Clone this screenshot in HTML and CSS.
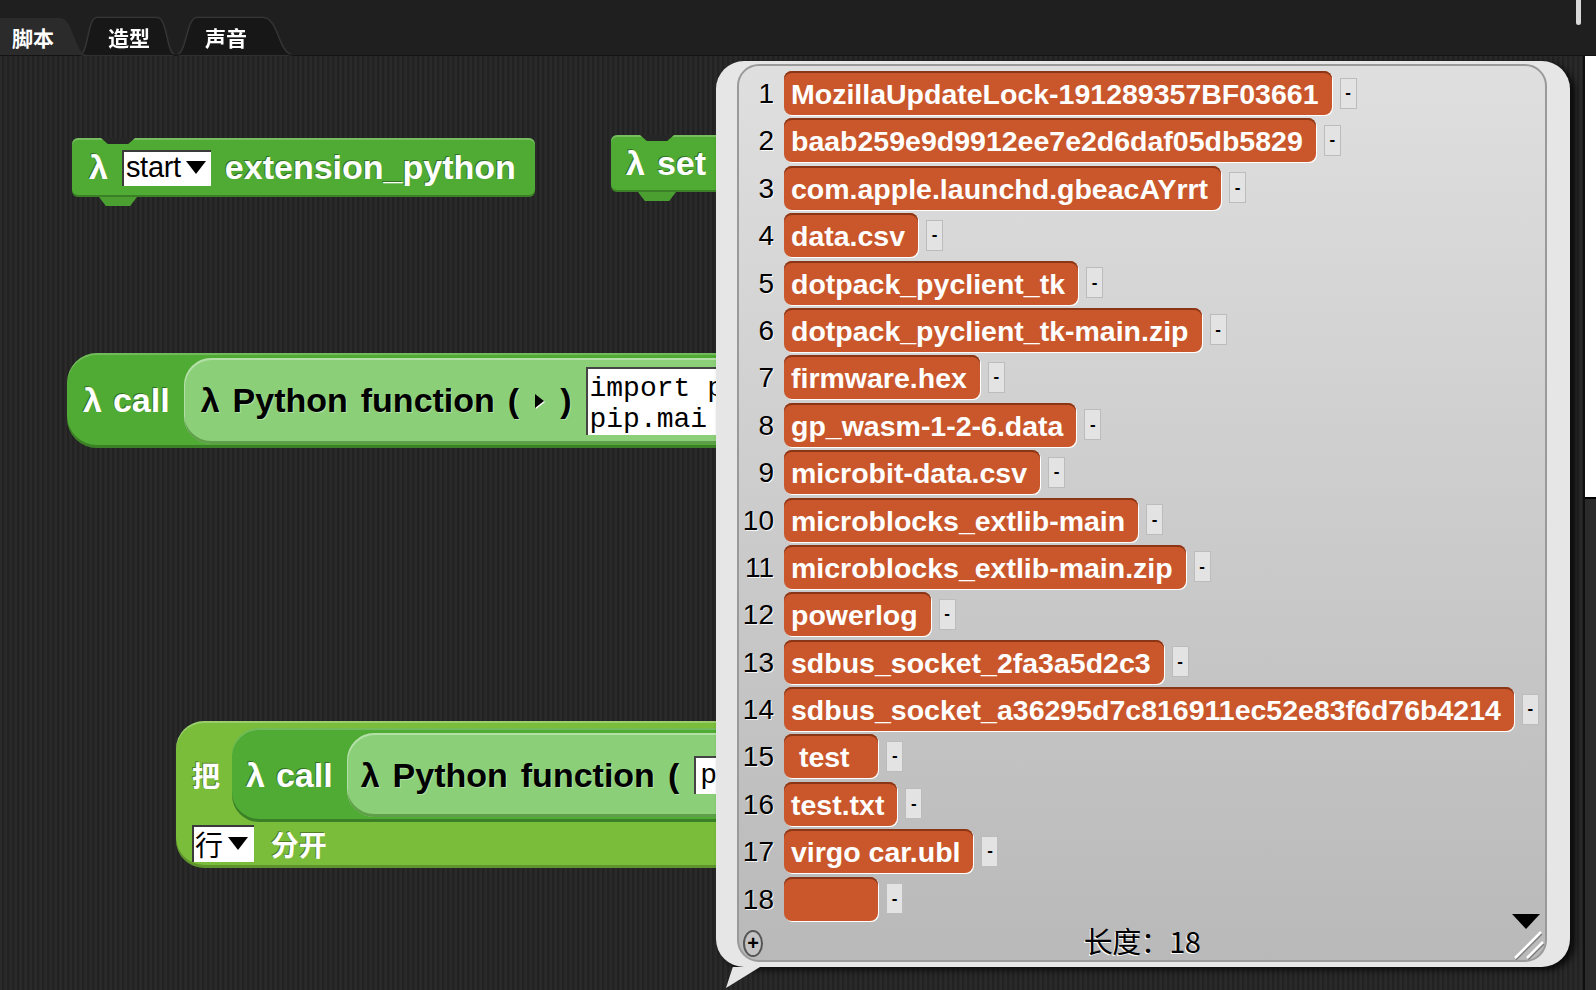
FILE: index.html
```html
<!DOCTYPE html>
<html>
<head>
<meta charset="utf-8">
<title>Snap</title>
<link rel="stylesheet" href="styles.css">
</head>
<body>
<div class="app">
  <header class="topbar">
    <nav class="tabs">
      <div class="tab tab-1 active"><div class="tab-face">脚本</div></div>
      <div class="tab tab-2"><div class="tab-face">造型</div></div>
      <div class="tab tab-3"><div class="tab-face">声音</div></div>
    </nav>
    <div class="topscroll"></div>
  </header>
  <div class="main">
    <section class="scripts">
      <div class="block cmd b-start">
        <span class="lbl">λ</span>
        <span class="dd"><span class="dd-text">start</span><i class="tri"></i></span>
        <span class="lbl">extension_python</span>
      </div>

      <div class="block cmd b-set">
        <span class="lbl">λ</span><span class="lbl">set</span>
      </div>

      <div class="block rep b-call">
        <span class="lbl">λ</span><span class="lbl">call</span>
        <div class="ring">
          <span>λ</span><span>Python</span><span>function</span><span>(</span><i class="arrow"></i><span>)</span>
          <div class="code">import p
pip.mai</div>
        </div>
      </div>

      <div class="block split">
        <div class="split-row">
          <span class="lbl cjk">把</span>
          <div class="rep call-inner">
            <span class="lbl">λ</span><span class="lbl">call</span>
            <div class="ring ring-2">
              <span>λ</span><span>Python</span><span>function</span><span>(</span>
              <div class="code code-1">p</div>
            </div>
          </div>
        </div>
        <div class="split-row2">
          <span class="dd dd-cjk"><span class="dd-text">行</span><i class="tri"></i></span>
          <span class="lbl cjk">分开</span>
        </div>
      </div>

      <div class="watcher">
        <div class="list">
          <div class="rows">
            <div class="row"><span class="idx">1</span><span class="cell">MozillaUpdateLock-191289357BF03661</span><span class="del">-</span></div>
            <div class="row"><span class="idx">2</span><span class="cell">baab259e9d9912ee7e2d6daf05db5829</span><span class="del">-</span></div>
            <div class="row"><span class="idx">3</span><span class="cell">com.apple.launchd.gbeacAYrrt</span><span class="del">-</span></div>
            <div class="row"><span class="idx">4</span><span class="cell">data.csv</span><span class="del">-</span></div>
            <div class="row"><span class="idx">5</span><span class="cell">dotpack_pyclient_tk</span><span class="del">-</span></div>
            <div class="row"><span class="idx">6</span><span class="cell">dotpack_pyclient_tk-main.zip</span><span class="del">-</span></div>
            <div class="row"><span class="idx">7</span><span class="cell">firmware.hex</span><span class="del">-</span></div>
            <div class="row"><span class="idx">8</span><span class="cell">gp_wasm-1-2-6.data</span><span class="del">-</span></div>
            <div class="row"><span class="idx">9</span><span class="cell">microbit-data.csv</span><span class="del">-</span></div>
            <div class="row"><span class="idx">10</span><span class="cell">microblocks_extlib-main</span><span class="del">-</span></div>
            <div class="row"><span class="idx">11</span><span class="cell">microblocks_extlib-main.zip</span><span class="del">-</span></div>
            <div class="row"><span class="idx">12</span><span class="cell">powerlog</span><span class="del">-</span></div>
            <div class="row"><span class="idx">13</span><span class="cell">sdbus_socket_2fa3a5d2c3</span><span class="del">-</span></div>
            <div class="row"><span class="idx">14</span><span class="cell">sdbus_socket_a36295d7c816911ec52e83f6d76b4214</span><span class="del">-</span></div>
            <div class="row"><span class="idx">15</span><span class="cell cell-pre"> test  </span><span class="del">-</span></div>
            <div class="row"><span class="idx">16</span><span class="cell">test.txt</span><span class="del">-</span></div>
            <div class="row"><span class="idx">17</span><span class="cell">virgo car.ubl</span><span class="del">-</span></div>
            <div class="row"><span class="idx">18</span><span class="cell cell-empty"></span><span class="del">-</span></div>
          </div>
          <div class="list-foot">
            <span class="plus">+</span>
            <span class="length">长度：18</span>
          </div>
          <i class="more"></i>
          <svg class="resize" width="32" height="30" viewBox="0 0 32 30">
            <path d="M2 28 L28 2" stroke="#ffffff" stroke-width="2.5"/>
            <path d="M3 30 L29 4" stroke="#7a7a7a" stroke-width="1.2"/>
            <path d="M14 28 L30 12" stroke="#ffffff" stroke-width="2.5"/>
            <path d="M15 30 L31 14" stroke="#7a7a7a" stroke-width="1.2"/>
          </svg>
        </div>
      </div>
    </section>
    <aside class="side">
      <div class="stage"></div>
      <div class="corral"></div>
    </aside>
  </div>
</div>
</body>
</html>
```

FILE: styles.css
```css
* { box-sizing: border-box; margin: 0; padding: 0; }
html, body { width: 1596px; height: 990px; overflow: hidden; background: #1e1e1e; }
body { font-family: "Liberation Sans", Arial, sans-serif; }

.app { width: 1596px; height: 990px; display: flex; flex-direction: column; }

/* ---------- top bar ---------- */
.topbar {
  height: 56px; flex: none; background: #1f1f1f; position: relative;
  display: flex; align-items: flex-end; border-bottom: 1px solid #141414;
}
.tabs { display: flex; height: 37px; }
.tab { height: 37px; }
.tab-face {
  height: 37px; display: flex; align-items: center; color: #fff;
  font: bold 21px "Noto Sans CJK SC", "Liberation Sans", sans-serif;
  background: #171717;
}
.tab-2, .tab-3 { filter: drop-shadow(0 0 1px #6a6a6a); }
.tab-1 { margin-left: -20px; width: 108px; position: relative; z-index: 2; }
.tab-1 .tab-face {
  background: #2b2b2b; padding-left: 32px;
  clip-path: path('M0 37 C 8 37 11 0 20 0 L 80 0 C 94 0 94 37 108 37 Z');
}
.tab-2 { margin-left: -8px; width: 95px; }
.tab-2 .tab-face {
  padding-left: 28px;
  clip-path: path('M0 37 C 9 37 8 0 17 0 L 77 0 C 87 0 86 37 95 37 Z');
}
.tab-3 { margin-left: 2px; width: 116px; }
.tab-3 .tab-face {
  padding-left: 28px;
  clip-path: path('M0 37 C 10 37 10 0 20 0 L 86 0 C 101 0 101 37 116 37 Z');
}
.topscroll {
  position: absolute; left: 1576px; top: 0; width: 5px; height: 25px;
  background: #d9d9d9; border-radius: 0 0 3px 3px;
}

/* ---------- main ---------- */
.main { flex: 1; display: flex; min-height: 0; }
.scripts {
  flex: 1; position: relative; overflow: hidden;
  background: repeating-linear-gradient(90deg, #2a2a2a 0 2px, #222222 2px 4px, #272727 4px 5px);
}
.side { width: 13px; flex: none; background: #0f0f0f; display: flex; flex-direction: column; padding-left: 2px; }
.stage { height: 441px; margin-top: 0; background: #ffffff; }
.corral { flex: 1; background: #2b2b2b; border-top: 2px solid #000; }

/* ---------- blocks ---------- */
.block {
  position: absolute; display: flex; align-items: center; color: #fff;
  font: bold 34px "Liberation Sans", Arial, sans-serif;
}
.lbl { text-shadow: -1px -1px 0 rgba(0,0,0,0.35); white-space: nowrap; }
.cjk { font-family: "Noto Sans CJK SC", sans-serif; font-size: 28px; }

.cmd {
  background: #4fab33; border-radius: 6px; gap: 14px;
  box-shadow: inset 0 2px 0 rgba(255,255,255,0.22), inset 0 -2px 0 rgba(0,0,0,0.25);
}
.cmd::before {
  content: ""; position: absolute; top: 0; left: 29px; width: 34px; height: 6px;
  background: #262626; clip-path: polygon(0 0, 100% 0, 80% 100%, 20% 100%);
}
.cmd::after {
  content: ""; position: absolute; top: 100%; left: 27px; width: 38px; height: 9px;
  background: #4a9f30; clip-path: polygon(0 0, 100% 0, 82% 100%, 18% 100%);
}
.b-start { left: 72px; top: 82px; height: 59px; padding: 0 19px 0 17px; }
.b-set { left: 611px; top: 79px; height: 57px; width: 200px; padding-left: 15px; gap: 12px; }

.dd {
  background: #fff; height: 36px; display: flex; align-items: center; gap: 5px;
  padding: 0 5px 0 4px; color: #000;
  font: 29px "Liberation Sans", Arial, sans-serif; letter-spacing: -0.3px;
  box-shadow: inset 2px 2px 0 #3a3a3a;
}
.tri {
  display: block; width: 0; height: 0;
  border-left: 10px solid transparent; border-right: 10px solid transparent;
  border-top: 13px solid #000;
}

.rep {
  background: #4fab33; border-radius: 30px 0 0 30px;
  box-shadow: inset 0 2px 0 rgba(255,255,255,0.2), inset 0 -3px 0 rgba(0,0,0,0.25);
}
.b-call { left: 67px; top: 297px; height: 95px; width: 760px; padding-left: 16px; gap: 11px; }
.ring {
  height: 86px; margin-left: 3px; flex: 1; display: flex; align-items: center; gap: 13px;
  background: #8bcf78; border-radius: 27px 0 0 27px; padding-left: 17px; color: #000;
  box-shadow: inset 1px 2px 0 rgba(255,255,255,0.35), inset 0 -3px 0 #5f9f4a;
  white-space: nowrap;
}
.ring span { text-shadow: 1px 1px 0 rgba(255,255,255,0.35); }
.arrow {
  display: block; width: 0; height: 0; margin: 0 3px;
  border-top: 7px solid transparent; border-bottom: 7px solid transparent;
  border-left: 9px solid #000; filter: drop-shadow(1px 1px 0 #fff);
}
.code {
  background: #fff; color: #000; margin-left: 1px; width: 160px;
  font: 28px/31px "Liberation Mono", "Courier New", monospace;
  white-space: pre; padding: 6px 4px 0 4px; height: 68px;
  box-shadow: inset 2px 2px 0 #444;
}
.code-1 { height: 38px; padding: 4px 4px 0 6px; margin-left: 2px; width: 60px; }

.split {
  left: 176px; top: 665px; height: 147px; width: 700px;
  flex-direction: column; align-items: stretch;
  background: #79bd3a; border-radius: 28px 0 0 28px; padding: 7px 0 6px 16px;
  box-shadow: inset 0 2px 0 rgba(255,255,255,0.25), inset 0 -3px 0 rgba(0,0,0,0.22);
}
.split-row { display: flex; align-items: center; height: 94px; gap: 12px; }
.split-row .cjk { margin-left: 0; }
.call-inner {
  flex: 1; height: 94px; display: flex; align-items: center; gap: 11px; padding-left: 14px;
  border-radius: 27px 0 0 27px;
}
.ring-2 { height: 84px; padding-left: 14px; margin-left: 3px; }
.split-row2 { display: flex; align-items: center; gap: 17px; margin-top: 3px; height: 37px; }
.dd-cjk { height: 37px; font: 28px "Noto Sans CJK SC", sans-serif; padding: 0 6px 0 3px; }

/* ---------- list watcher ---------- */
.watcher {
  position: absolute; left: 716px; top: 5px; width: 854px; height: 906px; z-index: 5;
  background: #e6e6e6; border-radius: 28px; padding: 3px 23px 5px 21px;
  box-shadow: 5px 3px 6px rgba(0,0,0,0.75);
  display: flex;
}
.watcher::after {
  content: ""; position: absolute; left: 10px; top: 100%; width: 34px; height: 21px;
  background: #e6e6e6; clip-path: polygon(0 100%, 20% 0, 100% 0);
}
.list {
  flex: 1; position: relative; overflow: hidden;
  border: 2px solid #9a9a9a; border-radius: 22px;
  background: linear-gradient(#dfdfdf, #b9b9b9);
  display: flex; flex-direction: column;
}
.rows { display: flex; flex-direction: column; gap: 3.4px; padding-top: 5px; }
.row { display: flex; align-items: center; height: 44px; }
.idx {
  width: 35px; text-align: right; flex: none;
  font: 28px "Liberation Sans", Arial, sans-serif; color: #000;
  line-height: 36px; padding-top: 2px;
  text-shadow: 1px 1px 0 rgba(255,255,255,0.85);
}
.cell {
  margin-left: 10px; height: 44px; white-space: nowrap;
  background: #c9572b; color: #fff; border-radius: 8px;
  font: bold 28.5px "Liberation Sans", Arial, sans-serif;
  line-height: 46px;
  padding: 0 13px 0 7px;
  box-shadow: inset 0 2px 0 #8a3516, 1px 1px 0 #ffffff;
}
.cell-pre { white-space: pre; }
.cell-empty { width: 94px; }
.del {
  margin-left: 8px; width: 17px; height: 31px; flex: none;
  background: #e3e3e3; border: 1px solid #bcbcbc;
  display: flex; align-items: center; justify-content: center;
  font: bold 17px "Liberation Sans", Arial, sans-serif; color: #000;
}
.list-foot {
  margin-top: auto; height: 40px; display: flex; align-items: center; justify-content: center;
  padding-bottom: 2px; position: relative;
}
.length {
  font: 29px "Noto Sans CJK SC", "Liberation Sans", sans-serif; color: #000;
  text-shadow: -1px 1px 0 #fff; letter-spacing: -0.5px;
}
.plus {
  position: absolute; left: 4px; top: 9px; width: 20px; height: 27px;
  border: 2px solid #555; border-radius: 50%; background: #c4c4c4;
  display: flex; align-items: center; justify-content: center;
  font: bold 20px "Liberation Sans", Arial, sans-serif; color: #000;
}
.more {
  position: absolute; right: 5px; bottom: 31px; width: 0; height: 0;
  border-left: 14px solid transparent; border-right: 14px solid transparent;
  border-top: 15px solid #000;
}
.resize { position: absolute; right: 0; bottom: 0; }
```
